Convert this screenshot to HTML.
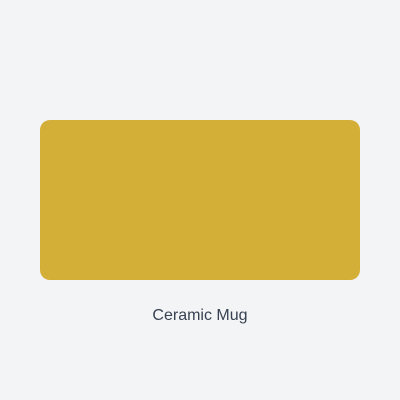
<!DOCTYPE html>
<html><head><meta charset="utf-8"><style>
html,body{margin:0;padding:0;width:400px;height:400px;background:#f3f4f6;overflow:hidden}
.box{position:absolute;left:40px;top:120px;width:320px;height:160px;background:#d4af37;border-radius:10px}
.t{position:absolute;left:0;width:400px;top:306px;text-align:center;font-family:"Liberation Sans",sans-serif;font-size:16px;color:#374151;line-height:20px}
</style></head><body>
<div class="box"></div>
<div class="t">Ceramic Mug</div>
</body></html>
